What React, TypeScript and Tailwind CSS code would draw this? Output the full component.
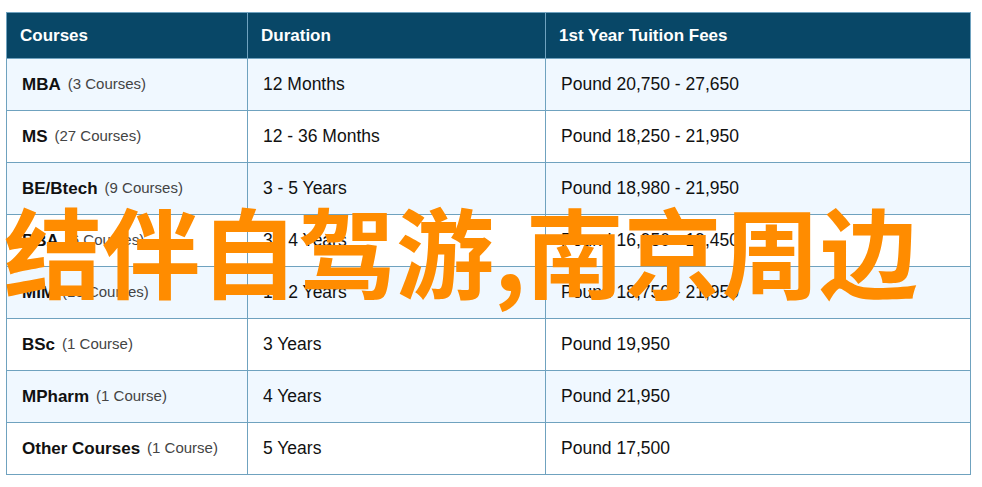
import React from "react";

const rows = [
  { name: "MBA", count: "(3 Courses)", dur: "12 Months", fee: "Pound 20,750 - 27,650" },
  { name: "MS", count: "(27 Courses)", dur: "12 - 36 Months", fee: "Pound 18,250 - 21,950" },
  { name: "BE/Btech", count: "(9 Courses)", dur: "3 - 5 Years", fee: "Pound 18,980 - 21,950" },
  { name: "BBA", count: "(6 Courses)", dur: "3 - 4 Years", fee: "Pound 16,950 - 19,450" },
  { name: "MIM", count: "(13 Courses)", dur: "1 - 2 Years", fee: "Pound 18,750 - 21,950" },
  { name: "BSc", count: "(1 Course)", dur: "3 Years", fee: "Pound 19,950" },
  { name: "MPharm", count: "(1 Course)", dur: "4 Years", fee: "Pound 21,950" },
  { name: "Other Courses", count: "(1 Course)", dur: "5 Years", fee: "Pound 17,500" },
];

export default function App() {
  return (
    <div
      className="relative w-[982px] h-[487px] bg-white overflow-hidden"
      style={{ fontFamily: '"Liberation Sans", Arial, sans-serif' }}
    >
      <div className="pt-[12px] pl-[6px]">
        <div className="grid grid-cols-[240px_297px_424px] grid-rows-[45px_repeat(8,51px)] gap-px p-px bg-[#6fa2bf] w-[965px]">
          {["Courses", "Duration", "1st Year Tuition Fees"].map((h) => (
            <div
              key={h}
              className="bg-[#084767] text-white font-bold text-[17px] flex items-center pl-[13px]"
            >
              {h}
            </div>
          ))}
          {rows.map((r, i) => {
            const bg = i % 2 === 0 ? "bg-[#f0f8ff]" : "bg-white";
            return (
              <React.Fragment key={r.name}>
                <div className={`${bg} flex items-center pl-[15px] text-[#111]`}>
                  <span className="font-bold text-[17px]">{r.name}</span>
                  <span className="ml-[7px] text-[15px] text-[#444]">{r.count}</span>
                </div>
                <div className={`${bg} flex items-center pl-[15px] text-[17.5px] text-[#111]`}>
                  {r.dur}
                </div>
                <div className={`${bg} flex items-center pl-[15px] text-[17.5px] text-[#111]`}>
                  {r.fee}
                </div>
              </React.Fragment>
            );
          })}
        </div>
      </div>
      <div
        className="absolute left-[4px] top-[199px] text-[98px] leading-none font-bold text-[#ff8c00] whitespace-nowrap"
        style={{ fontFamily: '"Noto Sans CJK SC", sans-serif' }}
      >
        结伴自驾游,南京周边
      </div>
    </div>
  );
}
